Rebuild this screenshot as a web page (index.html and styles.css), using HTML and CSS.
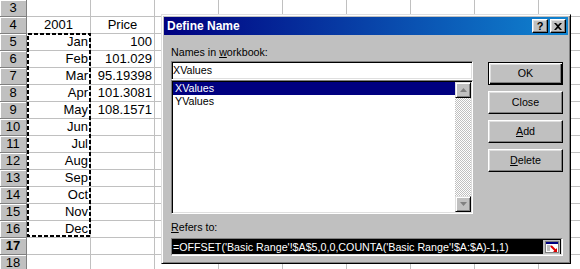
FILE: index.html
```html
<!DOCTYPE html>
<html>
<head>
<meta charset="utf-8">
<link rel="stylesheet" href="styles.css">
</head>
<body>
<div class="sheet">
  <div class="row"><div class="rh">3</div><div class="c"></div><div class="c"></div><div class="c"></div><div class="c"></div><div class="c"></div><div class="c"></div><div class="c"></div><div class="c"></div><div class="c"></div></div>
  <div class="row"><div class="rh">4</div><div class="c ctr">2001</div><div class="c ctr">Price</div><div class="c"></div><div class="c"></div><div class="c"></div><div class="c"></div><div class="c"></div><div class="c"></div><div class="c"></div></div>
  <div class="row"><div class="rh">5</div><div class="c r">Jan</div><div class="c r">100</div><div class="c"></div><div class="c"></div><div class="c"></div><div class="c"></div><div class="c"></div><div class="c"></div><div class="c"></div></div>
  <div class="row"><div class="rh">6</div><div class="c r">Feb</div><div class="c r">101.029</div><div class="c"></div><div class="c"></div><div class="c"></div><div class="c"></div><div class="c"></div><div class="c"></div><div class="c"></div></div>
  <div class="row"><div class="rh">7</div><div class="c r">Mar</div><div class="c r">95.19398</div><div class="c"></div><div class="c"></div><div class="c"></div><div class="c"></div><div class="c"></div><div class="c"></div><div class="c"></div></div>
  <div class="row"><div class="rh">8</div><div class="c r">Apr</div><div class="c r">101.3081</div><div class="c"></div><div class="c"></div><div class="c"></div><div class="c"></div><div class="c"></div><div class="c"></div><div class="c"></div></div>
  <div class="row"><div class="rh">9</div><div class="c r">May</div><div class="c r">108.1571</div><div class="c"></div><div class="c"></div><div class="c"></div><div class="c"></div><div class="c"></div><div class="c"></div><div class="c"></div></div>
  <div class="row"><div class="rh">10</div><div class="c r">Jun</div><div class="c"></div><div class="c"></div><div class="c"></div><div class="c"></div><div class="c"></div><div class="c"></div><div class="c"></div><div class="c"></div></div>
  <div class="row"><div class="rh">11</div><div class="c r">Jul</div><div class="c"></div><div class="c"></div><div class="c"></div><div class="c"></div><div class="c"></div><div class="c"></div><div class="c"></div><div class="c"></div></div>
  <div class="row"><div class="rh">12</div><div class="c r">Aug</div><div class="c"></div><div class="c"></div><div class="c"></div><div class="c"></div><div class="c"></div><div class="c"></div><div class="c"></div><div class="c"></div></div>
  <div class="row"><div class="rh">13</div><div class="c r">Sep</div><div class="c"></div><div class="c"></div><div class="c"></div><div class="c"></div><div class="c"></div><div class="c"></div><div class="c"></div><div class="c"></div></div>
  <div class="row"><div class="rh">14</div><div class="c r">Oct</div><div class="c"></div><div class="c"></div><div class="c"></div><div class="c"></div><div class="c"></div><div class="c"></div><div class="c"></div><div class="c"></div></div>
  <div class="row"><div class="rh">15</div><div class="c r">Nov</div><div class="c"></div><div class="c"></div><div class="c"></div><div class="c"></div><div class="c"></div><div class="c"></div><div class="c"></div><div class="c"></div></div>
  <div class="row"><div class="rh">16</div><div class="c r">Dec</div><div class="c"></div><div class="c"></div><div class="c"></div><div class="c"></div><div class="c"></div><div class="c"></div><div class="c"></div><div class="c"></div></div>
  <div class="row"><div class="rh active">17</div><div class="c"></div><div class="c"></div><div class="c"></div><div class="c"></div><div class="c"></div><div class="c"></div><div class="c"></div><div class="c"></div><div class="c"></div></div>
  <div class="row"><div class="rh">18</div><div class="c"></div><div class="c"></div><div class="c"></div><div class="c"></div><div class="c"></div><div class="c"></div><div class="c"></div><div class="c"></div><div class="c"></div></div>
</div>

<svg class="ants" width="64" height="204" viewBox="0 0 64 204">
  <rect x="1" y="1" width="62" height="202" fill="none" stroke="#000" stroke-width="2" stroke-dasharray="4 2"/>
</svg>

<div class="dialog">
  <div class="titlebar">
    <span class="title">Define Name</span>
    <div class="tbtns">
      <div class="tbtn help">?</div>
      <div class="tbtn">
        <svg width="8" height="7" viewBox="0 0 8 7"><path d="M0 0h2l2 2 2-2h2L5 3.5 8 7H6L4 5 2 7H0l3-3.5z" fill="#000"/></svg>
      </div>
    </div>
  </div>
  <div class="dbody">
    <div class="main">
      <div class="left">
        <div class="label">Names in <u>w</u>orkbook:</div>
        <div class="namefield">XValues</div>
        <div class="listbox">
          <div class="items">
            <div class="item sel">XValues</div>
            <div class="item">YValues</div>
          </div>
          <div class="vscroll">
            <div class="sbtn"><svg width="7" height="4" viewBox="0 0 7 4"><path d="M3.5 0L7 4H0z" fill="#808080"/></svg></div>
            <div class="track"></div>
            <div class="sbtn"><svg width="7" height="4" viewBox="0 0 7 4"><path d="M0 0h7L3.5 4z" fill="#808080"/></svg></div>
          </div>
        </div>
      </div>
      <div class="buttons">
        <div class="btn default">OK</div>
        <div class="btn">Close</div>
        <div class="btn"><u>A</u>dd</div>
        <div class="btn"><u>D</u>elete</div>
      </div>
    </div>
    <div class="label refers-label"><u>R</u>efers to:</div>
    <div class="refers">
      <span class="reftext">=OFFSET('Basic Range'!$A$5,0,0,COUNTA('Basic Range'!$A:$A)-1,1)</span>
      <span class="refbtn">
        <svg width="16" height="14" viewBox="0 0 16 14">
          <rect x="1.5" y="1.5" width="13" height="11" fill="#fff" stroke="#808080"/>
          <rect x="2" y="2" width="12" height="2" fill="#000080"/>
          <path d="M3 6h4M3 8h3M3 10h3" stroke="#808080"/>
          <path d="M7 6l5 5" stroke="#e00000" stroke-width="2"/>
          <path d="M13 12H9l4-4z" fill="#e00000"/>
        </svg>
      </span>
    </div>
  </div>
</div>
</body>
</html>
```

FILE: styles.css
```css
body {
  margin: 0;
  width: 580px;
  height: 269px;
  overflow: hidden;
  position: relative;
  background: #fff;
  font-family: "Liberation Sans", Arial, sans-serif;
  color: #000;
}

.sheet {
  display: flex;
  flex-direction: column;
}

.row {
  display: grid;
  grid-template-columns: 27px repeat(9, 64px);
  height: 17px;
}

.rh {
  box-sizing: border-box;
  background: #c0c0c0;
  border-right: 1px solid #808080;
  border-bottom: 1px solid #808080;
  box-shadow: inset 1px 1px #fff;
  text-align: center;
  font-size: 13px;
  line-height: 16px;
}

.rh.active {
  font-weight: bold;
}

.c {
  box-sizing: border-box;
  border-right: 1px solid #c0c0c0;
  border-bottom: 1px solid #c0c0c0;
  font-size: 13px;
  line-height: 16px;
  padding: 0 2px;
  white-space: nowrap;
  overflow: hidden;
}

.c.r { text-align: right; }
.c.ctr { text-align: center; }

.ants {
  position: absolute;
  left: 27px;
  top: 33px;
}

/* Dialog */
.dialog {
  position: absolute;
  left: 161px;
  top: 14px;
  width: 410px;
  height: 250px;
  box-sizing: border-box;
  background: #c0c0c0;
  border: 1px solid;
  border-color: #dfdfdf #000 #000 #dfdfdf;
  box-shadow: inset 1px 1px #fff, inset -1px -1px #808080;
  padding: 2px;
  display: flex;
  flex-direction: column;
  font-size: 10.7px;
}

.titlebar {
  height: 18px;
  background: linear-gradient(to right, #000080, #1084d0);
  display: flex;
  align-items: center;
  justify-content: space-between;
  padding: 0 2px 0 3px;
}

.title {
  color: #fff;
  font-weight: bold;
  font-size: 12px;
}

.tbtns {
  display: flex;
  gap: 2px;
}

.tbtn {
  width: 16px;
  height: 14px;
  box-sizing: border-box;
  background: #c0c0c0;
  border: 1px solid;
  border-color: #fff #000 #000 #fff;
  box-shadow: inset -1px -1px #808080, inset 1px 1px #dfdfdf;
  display: flex;
  align-items: center;
  justify-content: center;
}

.tbtn.help {
  font-weight: bold;
  font-size: 11px;
  line-height: 12px;
}

.dbody {
  flex: 1;
  padding: 10px 5px 0 7px;
  display: flex;
  flex-direction: column;
}

.main {
  display: flex;
  justify-content: space-between;
}

.left {
  width: 302px;
}

.label {
  height: 14px;
  line-height: 14px;
}

.namefield {
  margin-top: 2px;
  height: 19px;
  box-sizing: border-box;
  background: #fff;
  border: 1px solid;
  border-color: #808080 #fff #fff #808080;
  box-shadow: inset 1px 1px #000, inset -1px -1px #dfdfdf;
  padding: 1px 1px 0;
  line-height: 15px;
}

.listbox {
  height: 134px;
  box-sizing: border-box;
  background: #fff;
  border: 1px solid;
  border-color: #808080 #fff #fff #808080;
  box-shadow: inset 1px 1px #000, inset -1px -1px #dfdfdf;
  padding: 1px;
  display: flex;
}

.items {
  flex: 1;
}

.item {
  height: 13px;
  line-height: 13px;
  padding-left: 2px;
}

.item.sel {
  background: #000080;
  color: #fff;
}

.vscroll {
  width: 16px;
  display: flex;
  flex-direction: column;
}

.sbtn {
  height: 16px;
  box-sizing: border-box;
  background: #c0c0c0;
  border: 1px solid;
  border-color: #dfdfdf #000 #000 #dfdfdf;
  box-shadow: inset 1px 1px #fff, inset -1px -1px #808080;
  display: flex;
  align-items: center;
  justify-content: center;
}

.track {
  flex: 1;
  background: repeating-conic-gradient(#c0c0c0 0 25%, #fff 0 50%) 0 0 / 2px 2px;
}

.buttons {
  width: 75px;
  margin-top: 17px;
  display: flex;
  flex-direction: column;
  gap: 6px;
}

.btn {
  height: 23px;
  box-sizing: border-box;
  background: #c0c0c0;
  border: 1px solid;
  border-color: #fff #000 #000 #fff;
  box-shadow: inset -1px -1px #808080, inset 1px 1px #dfdfdf;
  text-align: center;
  line-height: 21px;
}

.btn.default {
  border-color: #000;
  box-shadow: inset 1px 1px #fff, inset -1px -1px #000, inset -2px -2px #808080, inset 2px 2px #dfdfdf;
}

.refers-label {
  margin-top: 6px;
}

.refers {
  margin-top: 4px;
  height: 18px;
  box-sizing: border-box;
  background: #000;
  border: 1px solid;
  border-color: #808080 #fff #fff #808080;
  box-shadow: inset -1px -1px #dfdfdf;
  padding: 1px 2px 1px 1px;
  display: flex;
  align-items: center;
  justify-content: space-between;
  color: #fff;
}

.reftext {
  white-space: nowrap;
  line-height: 14px;
}

.refbtn {
  width: 17px;
  height: 14px;
  background: #c0c0c0;
  display: flex;
  align-items: center;
  justify-content: center;
}
```
